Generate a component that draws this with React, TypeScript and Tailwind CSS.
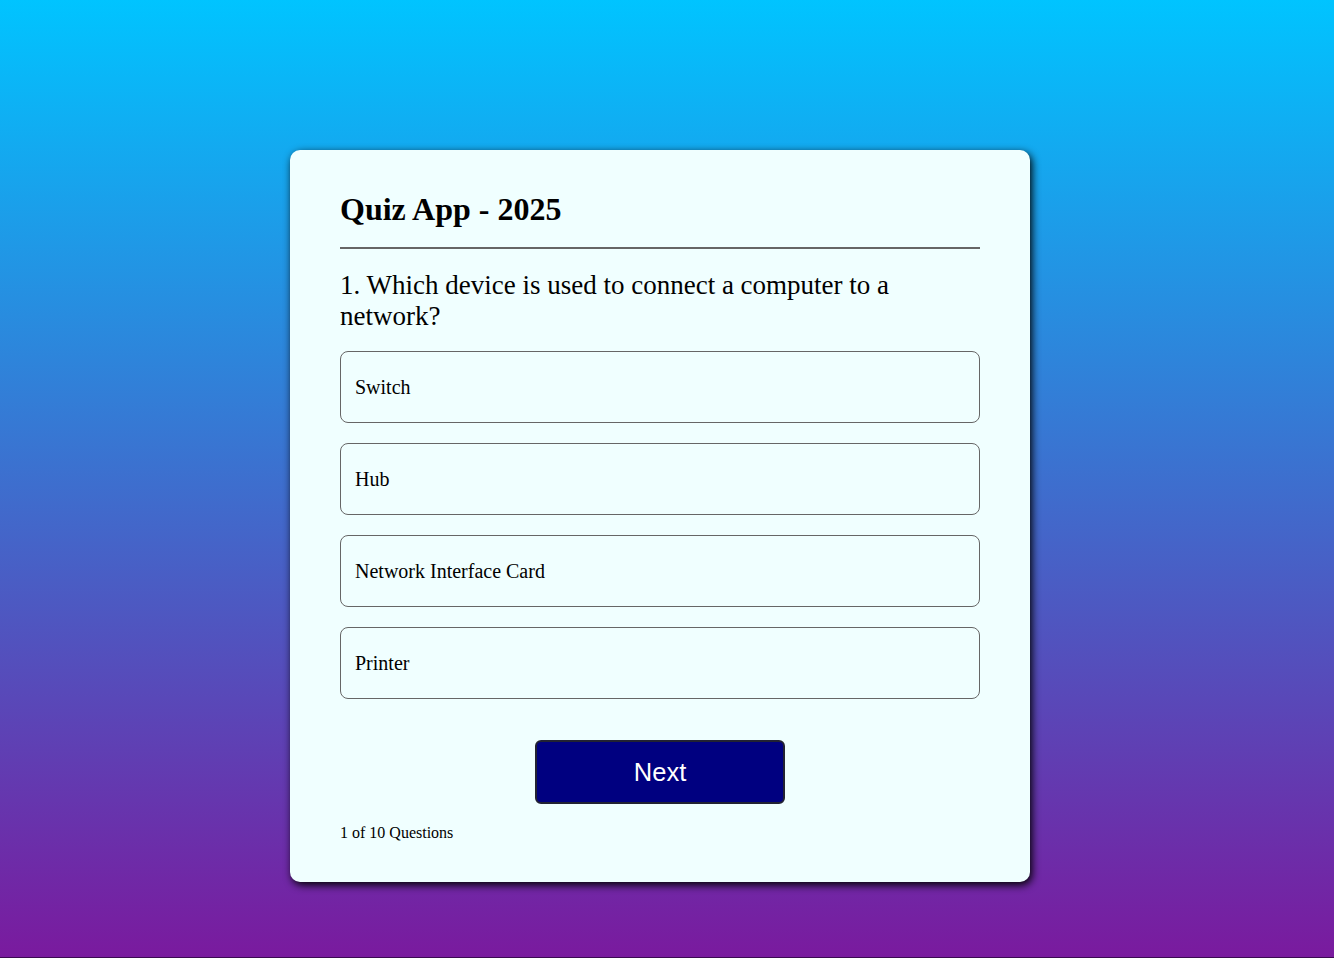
export default function App() {
  const options = ["Switch", "Hub", "Network Interface Card", "Printer"];
  return (
    <div className="h-[958px] w-full bg-[linear-gradient(to_bottom,#00c4ff,#7a1a9e)] flex flex-col items-center pt-[150px] pr-[14px] overflow-hidden relative" style={{ fontFamily: '"Liberation Serif", "Times New Roman", serif' }}>
      <div className="w-[740px] h-[732px] bg-[#f0ffff] rounded-[10px] shadow-[2px_3px_9px_rgba(0,0,0,1)] px-[50px] pt-[50px] text-black">
        <h1 className="text-[32px] font-bold leading-[37px] mt-[-9px]">Quiz App - 2025</h1>
        <div className="h-[2px] bg-[#666666] mt-[19px]" />
        <h2 className="text-[27px] leading-[31px] mt-[21px]">1. Which device is used to connect a computer to a network?</h2>
        <div className="flex flex-col gap-[20px] mt-[19px]">
          {options.map((o) => (
            <button key={o} className="h-[72px] w-full border border-[#666666] rounded-[8px] text-left pl-[14px] text-[20px] bg-transparent">
              {o}
            </button>
          ))}
        </div>
        <div className="flex justify-center mt-[41px]">
          <button className="w-[250px] h-[64px] bg-[#000080] text-white text-[25.5px] border-2 border-[#222233] rounded-[6px]" style={{ fontFamily: '"Liberation Sans", Arial, sans-serif' }}>
            Next
          </button>
        </div>
        <p className="text-[16px] mt-[17px]">1 of 10 Questions</p>
      </div>
      <div className="absolute bottom-0 left-0 w-full h-[1px] bg-[#3a0a50]" />
    </div>
  );
}
